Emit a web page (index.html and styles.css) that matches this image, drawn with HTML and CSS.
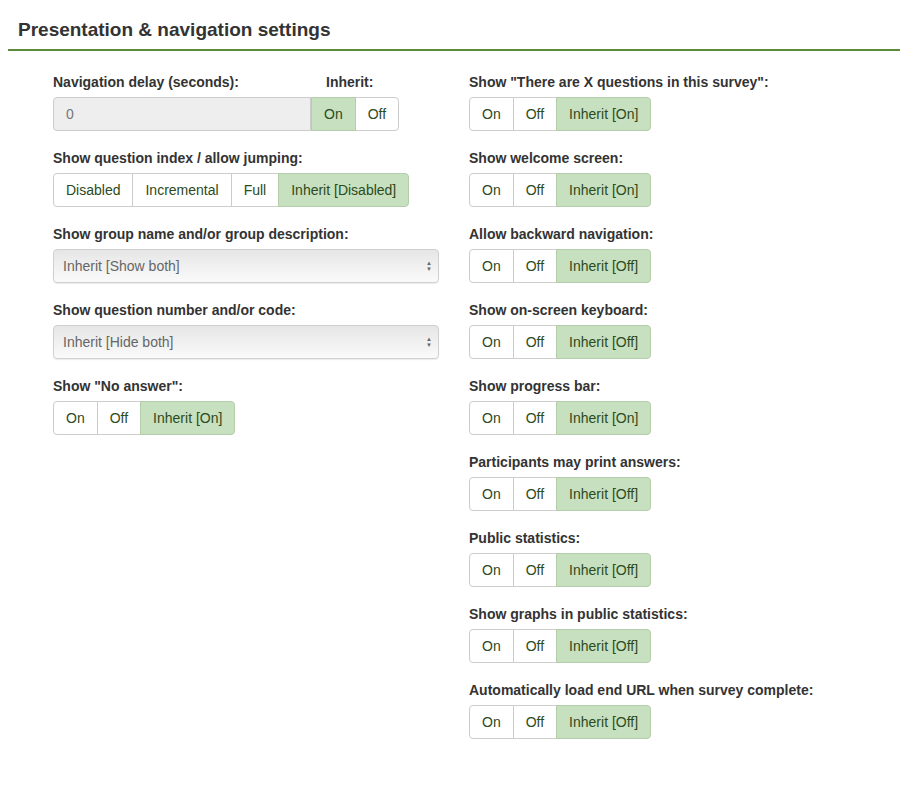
FILE: index.html
```html
<!DOCTYPE html>
<html>
<head>
<meta charset="utf-8">
<link rel="stylesheet" href="styles.css">
</head>
<body>
<div class="panel">
  <h2 class="panel-title">Presentation &amp; navigation settings</h2>
  <div class="cols">
    <div class="col">
      <div class="group">
        <div class="split">
          <div class="split-main">
            <label class="lbl">Navigation delay (seconds):</label>
            <input class="input" type="text" value="0" disabled>
          </div>
          <div class="split-side">
            <label class="lbl lbl-inherit">Inherit:</label>
            <div class="btns"><span class="btn active">On</span><span class="btn">Off</span></div>
          </div>
        </div>
      </div>
      <div class="group">
        <label class="lbl">Show question index / allow jumping:</label>
        <div class="btns"><span class="btn">Disabled</span><span class="btn">Incremental</span><span class="btn">Full</span><span class="btn active">Inherit [Disabled]</span></div>
      </div>
      <div class="group">
        <label class="lbl">Show group name and/or group description:</label>
        <div class="select"><span>Inherit [Show both]</span><span class="arrows">&#9650;<br>&#9660;</span></div>
      </div>
      <div class="group">
        <label class="lbl">Show question number and/or code:</label>
        <div class="select"><span>Inherit [Hide both]</span><span class="arrows">&#9650;<br>&#9660;</span></div>
      </div>
      <div class="group">
        <label class="lbl">Show "No answer":</label>
        <div class="btns"><span class="btn">On</span><span class="btn">Off</span><span class="btn active">Inherit [On]</span></div>
      </div>
    </div>
    <div class="col">
      <div class="group">
        <label class="lbl">Show "There are X questions in this survey":</label>
        <div class="btns"><span class="btn">On</span><span class="btn">Off</span><span class="btn active">Inherit [On]</span></div>
      </div>
      <div class="group">
        <label class="lbl">Show welcome screen:</label>
        <div class="btns"><span class="btn">On</span><span class="btn">Off</span><span class="btn active">Inherit [On]</span></div>
      </div>
      <div class="group">
        <label class="lbl">Allow backward navigation:</label>
        <div class="btns"><span class="btn">On</span><span class="btn">Off</span><span class="btn active">Inherit [Off]</span></div>
      </div>
      <div class="group">
        <label class="lbl">Show on-screen keyboard:</label>
        <div class="btns"><span class="btn">On</span><span class="btn">Off</span><span class="btn active">Inherit [Off]</span></div>
      </div>
      <div class="group">
        <label class="lbl">Show progress bar:</label>
        <div class="btns"><span class="btn">On</span><span class="btn">Off</span><span class="btn active">Inherit [On]</span></div>
      </div>
      <div class="group">
        <label class="lbl">Participants may print answers:</label>
        <div class="btns"><span class="btn">On</span><span class="btn">Off</span><span class="btn active">Inherit [Off]</span></div>
      </div>
      <div class="group">
        <label class="lbl">Public statistics:</label>
        <div class="btns"><span class="btn">On</span><span class="btn">Off</span><span class="btn active">Inherit [Off]</span></div>
      </div>
      <div class="group">
        <label class="lbl">Show graphs in public statistics:</label>
        <div class="btns"><span class="btn">On</span><span class="btn">Off</span><span class="btn active">Inherit [Off]</span></div>
      </div>
      <div class="group">
        <label class="lbl">Automatically load end URL when survey complete:</label>
        <div class="btns"><span class="btn">On</span><span class="btn">Off</span><span class="btn active">Inherit [Off]</span></div>
      </div>
    </div>
  </div>
</div>
</body>
</html>
```

FILE: styles.css
```css
html, body {
  margin: 0;
  padding: 0;
  background: #fff;
}
body {
  font-family: "Liberation Sans", Arial, sans-serif;
  font-size: 14px;
  line-height: 20px;
  color: #333;
}
.panel {
  padding: 0 15px 0 8px;
}
.panel-title {
  margin: 0;
  padding: 19px 10px 8px 10px;
  font-size: 19px;
  line-height: 22px;
  font-weight: 600;
  color: #333;
  border-bottom: 2px solid #5a8a3a;
}
.cols {
  display: grid;
  grid-template-columns: 386px 386px;
  column-gap: 30px;
  padding: 21px 0 0 45px;
}
.group {
  margin-bottom: 17px;
}
.lbl {
  display: block;
  font-weight: bold;
  margin-bottom: 5px;
  line-height: 20px;
}
.split {
  display: flex;
}
.split-main {
  width: 258px;
}
.split-side {
  flex: 0 0 auto;
}
.lbl-inherit {
  padding-left: 15px;
}
.input {
  display: block;
  box-sizing: border-box;
  width: 258px;
  height: 34px;
  padding: 6px 12px;
  font: 14px "Liberation Sans", Arial, sans-serif;
  color: #777;
  background: #eee;
  border: 1px solid #ccc;
  border-radius: 4px 0 0 4px;
  margin: 0;
}
.btns {
  display: inline-flex;
}
.btn {
  display: inline-block;
  padding: 6px 12px;
  line-height: 20px;
  border: 1px solid #ccc;
  background: #fff;
  color: #2c4a1c;
  margin-left: -1px;
}
.btn:first-child {
  margin-left: 0;
  border-radius: 4px 0 0 4px;
}
.btn:last-child {
  border-radius: 0 4px 4px 0;
}
.split .btn:first-child {
  border-radius: 0;
}
.btn.active {
  background: #c7e0bf;
  border-color: #b4cfaa;
  position: relative;
}
.select {
  box-sizing: border-box;
  height: 34px;
  width: 386px;
  display: flex;
  justify-content: space-between;
  align-items: center;
  padding: 0 6px 0 9px;
  color: #666;
  border: 1px solid #d0d0d0;
  border-radius: 4px;
  background: linear-gradient(#e6e6e6, #fafafa);
  box-shadow: 0 1px 1px rgba(0,0,0,0.08);
}
.arrows {
  font-size: 6px;
  line-height: 6px;
  color: #666;
  text-align: center;
}
```
